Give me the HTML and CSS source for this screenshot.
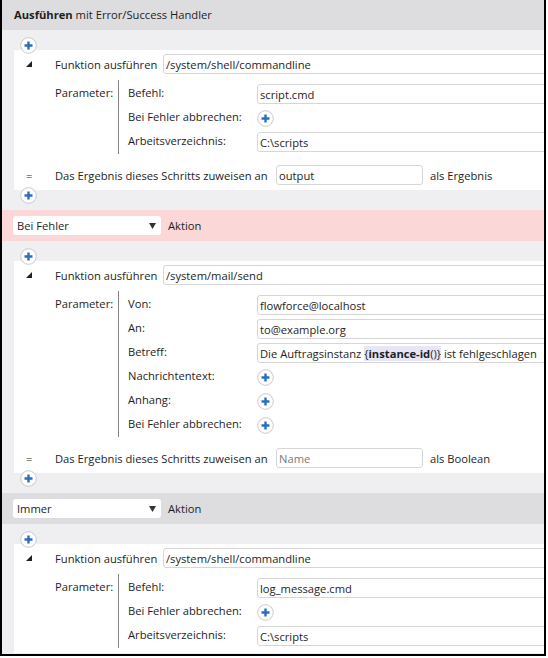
FILE: index.html
```html
<!DOCTYPE html>
<html lang="de">
<head>
  <meta charset="UTF-8" />
  <title>Ausführen mit Error/Success Handler</title>
  <link rel="stylesheet" href="styles.css">
</head>
<body>

<div class="frame">

  <div class="head"><b>Ausführen</b> mit Error/Success Handler</div>

  <!-- Schritt: Befehl ausführen -->
  <div class="step">
    <div class="add-row pre"><span class="add"><svg width="17" height="17"><circle cx="8.5" cy="8.5" r="7.8"/><path d="M4.5 8.5h8M8.5 4.5v8"/></svg></span></div>
    <div class="panel">
      <div class="func-row">
        <span class="toggle"><svg width="6" height="6"><polygon points="6,0 6,6 0,6"/></svg></span>
        <span class="func-label">Funktion ausführen</span>
        <div class="field">/system/shell/commandline</div>
      </div>
      <div class="params">
        <div class="params-label">Parameter:</div>
        <div class="param-list">
          <div class="param"><span class="param-name">Befehl:</span><div class="field">script.cmd</div></div>
          <div class="param"><span class="param-name">Bei Fehler abbrechen:</span><span class="add"><svg width="17" height="17"><circle cx="8.5" cy="8.5" r="7.8"/><path d="M4.5 8.5h8M8.5 4.5v8"/></svg></span></div>
          <div class="param"><span class="param-name">Arbeitsverzeichnis:</span><div class="field">C:\scripts</div></div>
        </div>
      </div>
      <div class="result-row">
        <span class="eq">=</span>
        <span class="result-label">Das Ergebnis dieses Schritts zuweisen an</span>
        <div class="field short">output</div>
        <span>als Ergebnis</span>
      </div>
    </div>
    <div class="add-row post"><span class="add"><svg width="17" height="17"><circle cx="8.5" cy="8.5" r="7.8"/><path d="M4.5 8.5h8M8.5 4.5v8"/></svg></span></div>
  </div>

  <!-- Handler: Bei Fehler -->
  <div class="band error">
    <div class="select">Bei Fehler<svg width="7" height="6"><polygon points="0,0 7,0 3.5,6"/></svg></div>
    <span>Aktion</span>
  </div>

  <div class="step">
    <div class="add-row pre"><span class="add"><svg width="17" height="17"><circle cx="8.5" cy="8.5" r="7.8"/><path d="M4.5 8.5h8M8.5 4.5v8"/></svg></span></div>
    <div class="panel">
      <div class="func-row">
        <span class="toggle"><svg width="6" height="6"><polygon points="6,0 6,6 0,6"/></svg></span>
        <span class="func-label">Funktion ausführen</span>
        <div class="field">/system/mail/send</div>
      </div>
      <div class="params">
        <div class="params-label">Parameter:</div>
        <div class="param-list">
          <div class="param"><span class="param-name">Von:</span><div class="field">flowforce@localhost</div></div>
          <div class="param"><span class="param-name">An:</span><div class="field">to@example.org</div></div>
          <div class="param"><span class="param-name">Betreff:</span><div class="field">Die Auftragsinstanz <span class="expr">{<b>instance-id</b>()}</span> ist fehlgeschlagen</div></div>
          <div class="param"><span class="param-name">Nachrichtentext:</span><span class="add"><svg width="17" height="17"><circle cx="8.5" cy="8.5" r="7.8"/><path d="M4.5 8.5h8M8.5 4.5v8"/></svg></span></div>
          <div class="param"><span class="param-name">Anhang:</span><span class="add"><svg width="17" height="17"><circle cx="8.5" cy="8.5" r="7.8"/><path d="M4.5 8.5h8M8.5 4.5v8"/></svg></span></div>
          <div class="param"><span class="param-name">Bei Fehler abbrechen:</span><span class="add"><svg width="17" height="17"><circle cx="8.5" cy="8.5" r="7.8"/><path d="M4.5 8.5h8M8.5 4.5v8"/></svg></span></div>
        </div>
      </div>
      <div class="result-row">
        <span class="eq">=</span>
        <span class="result-label">Das Ergebnis dieses Schritts zuweisen an</span>
        <div class="field short placeholder">Name</div>
        <span>als Boolean</span>
      </div>
    </div>
    <div class="add-row post"><span class="add"><svg width="17" height="17"><circle cx="8.5" cy="8.5" r="7.8"/><path d="M4.5 8.5h8M8.5 4.5v8"/></svg></span></div>
  </div>

  <!-- Handler: Immer -->
  <div class="band">
    <div class="select">Immer<svg width="7" height="6"><polygon points="0,0 7,0 3.5,6"/></svg></div>
    <span>Aktion</span>
  </div>

  <div class="step">
    <div class="add-row pre"><span class="add"><svg width="17" height="17"><circle cx="8.5" cy="8.5" r="7.8"/><path d="M4.5 8.5h8M8.5 4.5v8"/></svg></span></div>
    <div class="panel">
      <div class="func-row">
        <span class="toggle"><svg width="6" height="6"><polygon points="6,0 6,6 0,6"/></svg></span>
        <span class="func-label">Funktion ausführen</span>
        <div class="field">/system/shell/commandline</div>
      </div>
      <div class="params">
        <div class="params-label">Parameter:</div>
        <div class="param-list">
          <div class="param"><span class="param-name">Befehl:</span><div class="field">log_message.cmd</div></div>
          <div class="param"><span class="param-name">Bei Fehler abbrechen:</span><span class="add"><svg width="17" height="17"><circle cx="8.5" cy="8.5" r="7.8"/><path d="M4.5 8.5h8M8.5 4.5v8"/></svg></span></div>
          <div class="param"><span class="param-name">Arbeitsverzeichnis:</span><div class="field">C:\scripts</div></div>
        </div>
      </div>
    </div>
  </div>

</div>

</body>
</html>
```

FILE: styles.css
```css
body {
  margin: 0;
  font-family: "Open Sans", "Noto Sans", sans-serif;
  font-size: 11.2px;
  color: #1e1e1e;
  background: #fff;
}
.frame {
  width: 546px;
  height: 656px;
  box-sizing: border-box;
  border: 2px solid #000;
  border-top: none;
  background: #efeff1;
  overflow: hidden;
}
.head {
  height: 30px;
  line-height: 30px;
  padding-left: 12px;
  background: #dddde0;
}

/* Schritte */
.step {
  padding-left: 12px;
  background: #efeff1;
}
.add-row {
  height: 20px;
  display: flex;
  align-items: flex-start;
}
.add-row .add {
  margin-left: 6px;
}
.add-row.pre .add {
  margin-top: 7px;
}
.add-row.post .add {
  margin-top: -3px;
}
.add {
  display: inline-flex;
  width: 17px;
  height: 17px;
}
.add circle {
  fill: #fff;
  stroke: #c9c9cc;
  stroke-width: 1;
}
.add path {
  stroke: #2a6fbf;
  stroke-width: 2.4;
  fill: none;
}
.panel {
  background: #fff;
  padding: 4px 0 5px;
}
.func-row {
  display: flex;
  align-items: center;
  height: 20px;
}
.toggle {
  width: 29px;
  margin-left: 12px;
  display: flex;
  align-items: center;
}
.toggle polygon {
  fill: #222;
}
.func-label {
  width: 108px;
}
.field {
  flex: 1;
  height: 20px;
  line-height: 19px;
  box-sizing: border-box;
  border: 1px solid #d6d6d8;
  border-radius: 3px;
  padding-left: 2px;
  margin-right: -4px;
  white-space: nowrap;
  overflow: hidden;
  background: #fff;
}
.field.short {
  flex: none;
  width: 147px;
  margin-right: 7px;
}
.placeholder {
  color: #7a7a7a;
}
.expr {
  background: #e7e6f7;
}

/* Parameter */
.params {
  display: flex;
  margin-top: 6px;
}
.params-label {
  width: 63px;
  margin-left: 41px;
  padding-top: 2px;
  line-height: 22px;
}
.param-list {
  flex: 1;
  border-left: 1px solid #858585;
  padding: 2px 0 0 9px;
}
.param {
  display: flex;
  align-items: center;
  height: 24px;
}
.param-name {
  width: 129px;
  margin-top: -4px;
}

/* Ergebnis */
.result-row {
  display: flex;
  align-items: center;
  height: 20px;
  margin-top: 11px;
}
.eq {
  width: 29px;
  margin-left: 12px;
}
.result-label {
  width: 221px;
}

/* Handler-Leisten */
.band {
  height: 31px;
  display: flex;
  align-items: center;
  padding-left: 11px;
  background: #dddde0;
}
.band.error {
  background: #fbd7d7;
}
.select {
  width: 148px;
  height: 19px;
  line-height: 19px;
  box-sizing: border-box;
  padding: 0 5px 0 4px;
  margin-right: 7px;
  background: #fff;
  border-radius: 3px;
  display: flex;
  align-items: center;
  justify-content: space-between;
}
.select polygon {
  fill: #333;
}
```
